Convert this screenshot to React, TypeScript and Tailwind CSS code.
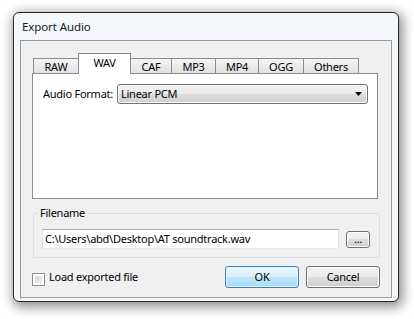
import React from "react";

const btnGray =
  "bg-[linear-gradient(#f2f2f2_0%,#ebebeb_50%,#dddddd_50%,#cfcfcf_100%)] border border-[#707070] rounded-[3px] shadow-[inset_0_0_0_1px_#fcfcfc]";

function Tab({ label, w, selected, first }: { label: string; w: number; selected?: boolean; first?: boolean }) {
  const base = "flex items-center justify-center border border-b-0 border-[#898c95] leading-none whitespace-nowrap";
  return (
    <div
      className={
        base +
        (first ? "" : " -ml-[1px]") +
        (selected
          ? " h-[21px] -mb-[1px] relative z-10 bg-white pb-[3px]"
          : " h-[15px] bg-[linear-gradient(#f3f3f3,#e2e2e2)]")
      }
      style={{ width: w }}
    >
      {label}
    </div>
  );
}

export default function App() {
  return (
    <div className="w-[414px] h-[319px] bg-white pt-[12px] pl-[13px] font-['Noto_Sans',sans-serif] text-[11px] tracking-[-0.25px] text-black overflow-hidden">
      <div className="w-[386px] h-[290px] rounded-[6px] border border-[#262626] bg-[#f4f7fb] shadow-[inset_0_0_0_1px_rgba(255,255,255,0.9),2px_3px_12px_2px_rgba(0,0,0,0.45)] flex flex-col px-[6px] pb-[3px]">
        <div className="h-[27px] flex items-center pl-[2px] text-[11.5px] tracking-[-0.1px] text-[#1a1a1a]">Export Audio</div>
        <div className="h-[258px] border border-[#9a9a9a] bg-[#f0f0f0] px-[11px] pt-[12px] flex flex-col">
          {/* Tabs */}
          <div className="flex items-end h-[20px] pl-[1px]">
            <Tab label="RAW" w={46} first />
            <Tab label="WAV" w={53} selected />
            <Tab label="CAF" w={42} />
            <Tab label="MP3" w={45} />
            <Tab label="MP4" w={44} />
            <Tab label="OGG" w={46} />
            <Tab label="Others" w={56} />
          </div>
          <div className="w-[346px] h-[126px] border border-[#898c95] bg-white pt-[10px] pl-[10px] flex items-start">
            <div className="w-[74px] h-[20px] flex items-center whitespace-nowrap">Audio Format:</div>
            <div className={"w-[251px] h-[20px] flex items-center justify-between pl-[3px] pr-[5px] " + btnGray}>
              <span>Linear PCM</span>
              <svg width="7" height="4" viewBox="0 0 7 4">
                <path d="M0 0H7L3.5 4Z" fill="#000" />
              </svg>
            </div>
          </div>
          {/* Filename group */}
          <fieldset className="mt-[6px] ml-[1px] w-[347px] border border-[#d5dfe5] rounded-[3px] p-0 m-0">
            <legend className="ml-[4px] px-[2px] leading-[16px]">Filename</legend>
            <div className="flex items-center px-[8px] pt-[8px] pb-[8px]">
              <div className="w-[297px] h-[20px] border border-[#abadb3] border-x-[#dbdfe6] border-b-[#e3e9ef] bg-white flex items-center pl-[2px] whitespace-nowrap overflow-hidden">
                C:\Users\abd\Desktop\AT soundtrack.wav
              </div>
              <div className={"ml-[7px] w-[24px] h-[17px] flex items-end justify-center text-[11px] leading-none pb-[3px] " + btnGray}>
                ...
              </div>
            </div>
          </fieldset>
          {/* Bottom row */}
          <div className="mt-[8px] flex items-start justify-between h-[22px]">
            <div className="flex items-start">
              <div className="mt-[7px] w-[13px] h-[13px] border border-[#8e8f8f] bg-white p-[2px]">
                <div className="w-full h-full bg-[linear-gradient(135deg,#cbcfd5,#f6f6f6)] border border-[#e0e0e0]" />
              </div>
              <div className="ml-[4px] pt-[3px] leading-[16px] whitespace-nowrap">Load exported file</div>
            </div>
            <div className="flex gap-[7px]">
              <div className="w-[74px] h-[22px] flex items-center justify-center rounded-[3px] border border-[#3c7fb1] bg-[linear-gradient(#eaf6fd_0%,#d9f0fc_50%,#bee6fd_50%,#a7d9f5_100%)] shadow-[inset_0_0_0_1px_#e3f4fc]">
                OK
              </div>
              <div className={"w-[74px] h-[22px] flex items-center justify-center " + btnGray}>Cancel</div>
            </div>
          </div>
        </div>
      </div>
    </div>
  );
}
